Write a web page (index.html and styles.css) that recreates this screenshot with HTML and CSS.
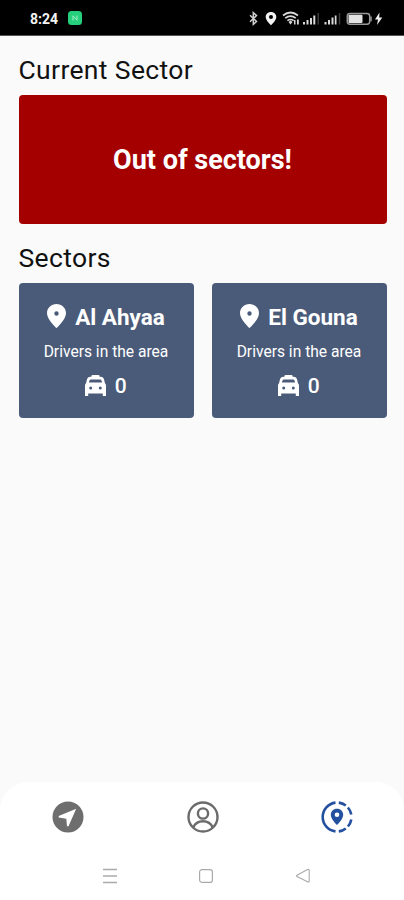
FILE: index.html
```html
<!DOCTYPE html>
<html lang="en">
<head>
<meta charset="utf-8">
<title>Sectors</title>
<link rel="stylesheet" href="styles.css">
</head>
<body>
<svg width="0" height="0" class="defs">
  <symbol id="pin" viewBox="0 0 19 24"><path fill-rule="evenodd" d="M9.5 0C4.2 0 0 4.1 0 9.2C0 15.6 9.500 24 9.500 24S19 15.600 19 9.200C19 4.100 14.800 0 9.500 0ZM9.500 7.300a2.200 2.200 0 1 1 0 4.400a2.200 2.200 0 0 1 0-4.400Z"/></symbol>
  <symbol id="taxi" viewBox="0 0 21 21"><path fill-rule="evenodd" d="M6.500 1.800V1q0-1 1-1h6q1 0 1 1v.8h1.500Q18.500 1.800 19 4.300L19.900 8Q21 9 21 10.500V21H17.800V18.500H3.200V21H0V10.500Q0 9 1.100 8L2 4.300Q2.500 1.800 5 1.800ZM6 4.600Q4.700 4.600 4.400 5.700L3.900 7.500H17.100L16.600 5.700Q16.300 4.600 15 4.600ZM5.700 11.400a1.500 1.500 0 1 0 0 3a1.500 1.500 0 0 0 0-3ZM15.300 11.400a1.500 1.500 0 1 0 0 3a1.500 1.500 0 0 0 0-3Z"/></symbol>
</svg>
<div class="screen">
  <header class="status">
    <div class="status-left">
      <span class="time">8:24</span>
      <svg width="14" height="14" viewBox="0 0 14 14"><rect width="14" height="14" rx="3.500" fill="#25cf7c"/><path d="M5 9.500V4.800L9 9.200V4.500" fill="none" stroke="#a5f0c8"/></svg>
    </div>
    <svg class="status-icons" width="136" height="18" viewBox="248 9 136 18">
      <path d="M250 15.300L256.500 21.500L253.300 24.300V12.700L256.500 15.500L250 21.700" fill="none" stroke="#d0d0d0" stroke-width="1.500"/>
      <path fill="#f2f2f2" fill-rule="evenodd" d="M271 12c-3.200 0-5.300 2.200-5.300 5c0 3.600 5.300 8.200 5.300 8.200s5.300-4.600 5.300-8.200c0-2.800-2.100-5-5.300-5Zm0 3a2 2 0 1 1 0 4a2 2 0 0 1 0-4Z"/>
      <g fill="none" stroke="#d8d8d8" stroke-width="1.700"><path d="M283 15.500Q290.500 9.500 298 15.500"/><path d="M285.200 18.200Q290.500 13.900 295.800 18.200"/><path d="M287.400 20.700Q290.500 18.300 293.600 20.700"/></g>
      <path fill="#d8d8d8" d="M288.500 22L290.500 20.500L292.500 22L290.500 24.500ZM294 20h1.500v4.500H294ZM297 19.500h1.800v5H297Z"/>
      <path fill="#d8d8d8" d="M303 22h2v2.500h-2ZM306.500 20h2v4.500h-2ZM310 18h2v6.500h-2ZM313.300 15.500h2v9h-2ZM324.500 22h2v2.500h-2ZM328 20h2v4.500h-2ZM331.500 17.500h2v7h-2ZM334.800 15.500h1.700v9h-1.700Z"/>
      <path fill="#3b3b3b" d="M317.500 13h1.500v11.500h-1.500ZM338.800 13h1.500v11.500h-1.500Z"/>
      <rect x="347.300" y="13.500" width="22.400" height="10.700" rx="2.700" fill="none" stroke="#999" stroke-width="1.500"/>
      <rect x="348.500" y="14.800" width="14" height="8.200" rx="1" fill="#e2e2e2"/>
      <path d="M371 16.500v4.800" stroke="#999" stroke-width="1.500"/>
      <path fill="#eee" d="M379.500 12.500L375 19.500H378L377 25L382.300 17.500H379.200Z"/>
    </svg>
  </header>
  <main class="content">
    <h1 class="heading">Current Sector</h1>
    <section class="current">Out of sectors!</section>
    <h1 class="heading heading-list">Sectors</h1>
    <section class="sectors">
      <article class="sector">
        <div class="name"><svg class="pin"><use href="#pin"/></svg><span>Al Ahyaa</span></div>
        <div class="label">Drivers in the area</div>
        <div class="count"><svg class="taxi"><use href="#taxi"/></svg><span>0</span></div>
      </article>
      <article class="sector">
        <div class="name"><svg class="pin"><use href="#pin"/></svg><span>El Gouna</span></div>
        <div class="label">Drivers in the area</div>
        <div class="count"><svg class="taxi"><use href="#taxi"/></svg><span>0</span></div>
      </article>
    </section>
  </main>
  <footer class="bottom">
    <nav class="tabs">
      <svg class="tab" viewBox="0 0 32 32"><circle cx="16" cy="16" r="15.500" fill="#6e6e6e"/><path d="M24.200 7.800L6.700 15V16.500L14.300 17.700L15 25.200H16.500Z" fill="#fff"/></svg>
      <svg class="tab" viewBox="0 0 32 32" fill="none" stroke="#6b6b6b" stroke-width="2.400"><circle cx="16" cy="16" r="14.500"/><circle cx="16" cy="12.500" r="5.100"/><path d="M6.300 26.500C8 22.300 11.500 20.200 16 20.200S24 22.300 25.700 26.500"/></svg>
      <svg class="tab" viewBox="0 0 32 32"><g fill="none" stroke="#2450a0" stroke-width="2.600"><path d="M14.500 1.600A14.500 14.500 0 0 0 14.500 30.400"/><path d="M17.800 1.600A14.500 14.500 0 0 1 24.800 4.600M26.900 6.500A14.500 14.500 0 0 1 30.300 13.500M30.300 18.500A14.500 14.500 0 0 1 26.900 25.500M24.800 27.400A14.500 14.500 0 0 1 17.800 30.400"/></g><path fill="#2450a0" fill-rule="evenodd" d="M16 7.700c-3.700 0-6.200 2.700-6.200 6.100C9.800 18.500 16 24 16 24s6.200-5.500 6.200-10.200C22.200 10.400 19.700 7.700 16 7.700Zm0 3.800a2.300 2.300 0 1 1 0 4.600a2.300 2.300 0 0 1 0-4.600Z"/></svg>
    </nav>
    <div class="system">
      <svg width="16" height="16" viewBox="0 0 16 16" stroke="#aaa" stroke-width="1.300"><path d="M1 1.500H15M1 8H15M1 14.500H15"/></svg>
      <svg width="16" height="16" viewBox="0 0 16 16" fill="none" stroke="#aaa" stroke-width="1.200"><rect x="1.600" y="1.600" width="12.800" height="12.800" rx="2.500"/></svg>
      <svg width="16" height="16" viewBox="0 0 16 16" fill="none" stroke="#aaa" stroke-width="1.100" stroke-linejoin="round"><path d="M2 7.300L12.500 1.500Q14.200 1 14.200 2.500V13Q14.200 14.700 12.500 13.800L2 8.500Q1 8 2 7.300Z"/></svg>
    </div>
  </footer>
</div>
</body>
</html>
```
FILE: styles.css
```css
* { box-sizing: border-box; }
body { margin: 0; font-family: Roboto, "Liberation Sans", sans-serif; background: #fafafa; }
svg { display: block; flex: none; }
.defs { position: absolute; }
.screen { width: 404px; height: 900px; display: flex; flex-direction: column; overflow: hidden; }
.status { height: 36px; flex: none; background: #000; border-bottom: 1px solid #555; display: flex; justify-content: space-between; align-items: center; padding: 1px 20px 0 30px; }
.status-left { display: flex; align-items: center; gap: 10px; }
.time { color: #f4f4f4; font-size: 14px; font-weight: 700; line-height: 18px; width: 28px; white-space: nowrap; padding-top: 1px; }
.content { flex: 1; padding: 18px 17.500px 0 18.500px; }
.heading { margin: 0; font-size: 26.500px; font-weight: 400; line-height: 32px; color: #111; letter-spacing: 0.350px; }
.current { margin-top: 9px; height: 129px; border-radius: 4px; background: #a50000; color: #fff; font-size: 27px; font-weight: 700; display: flex; align-items: center; justify-content: center; }
.heading-list { margin-top: 18px; }
.sectors { margin-top: 9px; display: grid; grid-template-columns: 1fr 1fr; gap: 18px; }
.sector { height: 134.500px; border-radius: 4px; background: #4a5b79; color: #fff; display: flex; flex-direction: column; align-items: center; padding-top: 19px; }
.name { display: flex; align-items: center; gap: 9px; height: 29px; font-size: 22.500px; font-weight: 700; }
.pin { width: 19px; height: 24px; fill: #fff; margin-top: -1px; }
.label { margin-top: 11px; font-size: 15.600px; line-height: 20px; }
.count { margin-top: 10px; height: 26px; display: flex; align-items: center; gap: 8.500px; font-size: 21px; font-weight: 500; }
.count span { padding-top: 1px; }
.taxi { width: 21px; height: 21px; fill: #fff; }
.bottom { height: 118px; flex: none; background: #fff; border-radius: 28px 28px 0 0; }
.tabs { display: flex; justify-content: space-between; padding: 19px 51px 0 52px; }
.tab { width: 32px; height: 32px; }
.system { display: flex; justify-content: space-between; padding: 35px 93.500px 0 101.500px; }
```
